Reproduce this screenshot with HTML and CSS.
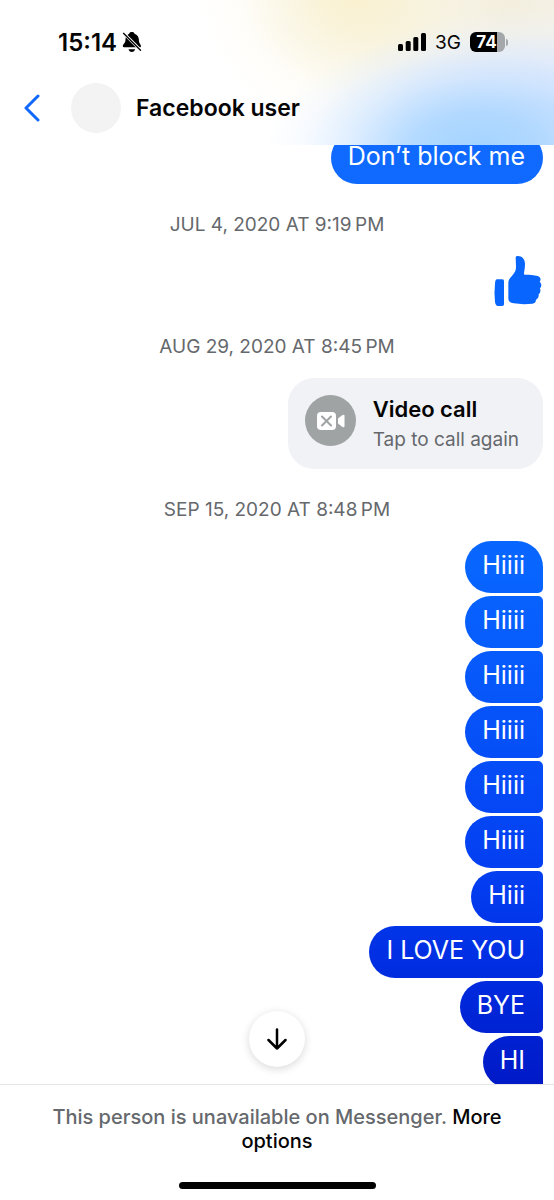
FILE: index.html
```html
<!DOCTYPE html>
<html lang="en">
<head>
<meta charset="utf-8">
<meta name="viewport" content="width=device-width, initial-scale=1">
<title>Facebook user</title>
<link rel="stylesheet" href="styles.css">
</head>
<body>
<div class="screen">
  <header class="header">
    <div class="status">
      <div class="status-group">
        <span class="clock">15:14</span>
        <svg class="bell" viewBox="0 0 57 60" aria-hidden="true">
          <path d="M28 0c5 0 7 2 8 5 9 3 12 9 13 17 0 9 2 12 5 16 2 3 2 8-2 8H5c-5 0-5-5-2-9 5-5 6-8 6-15C9 14 13 8 20 5c1-3 3-5 8-5zM18 52h20c-1 5-5 8-10 8s-9-3-10-8z"/>
          <path class="bell-gap" d="M0 0l57 57"/>
          <path class="bell-slash" d="M3 4l51 51"/>
        </svg>
      </div>
      <div class="status-group status-right">
        <svg class="signal" viewBox="0 0 28 18" aria-hidden="true">
          <rect x="0" y="11" width="5" height="7" rx="1.5"/>
          <rect x="7.7" y="8" width="5" height="10" rx="1.5"/>
          <rect x="15.3" y="4" width="5" height="14" rx="1.5"/>
          <rect x="23" y="0" width="5" height="18" rx="1.5"/>
        </svg>
        <span class="network">3G</span>
        <span class="battery"><span class="battery-body">74</span><span class="battery-tip"></span></span>
      </div>
    </div>
    <div class="nav">
      <button class="back" type="button" aria-label="Back">
        <svg viewBox="0 0 16 28" aria-hidden="true"><path d="M14 2L2 14l12 12"/></svg>
      </button>
      <span class="avatar"></span>
      <h1 class="name">Facebook user</h1>
    </div>
  </header>

  <main class="chat">
    <div class="messages">
      <p class="bubble">Don’t block me</p>
      <p class="date">JUL 4, 2020 AT 9:19&#8201;PM</p>
      <svg class="thumb" viewBox="0 0 147 150" role="img" aria-label="Thumbs up">
        <path d="M9 70h16q5 0 5 5v70q0 5-5 5H12q-7 0-9-12-3-28 0-56 1-12 6-12z"/>
        <path d="M65 6c0-4 2-6 6-6 14 0 22 10 22 24 0 12-2 20-3 28-1 3 0 4 3 4 14 0 27 1 38 4 9 3 11 11 6 17 6 5 7 13 1 20 3 8 1 14-4 18 1 8-2 13-8 16-1 8-4 11-11 12-18 2-38 2-56-1-11-1-16-6-16-16V82c0-9 3-14 10-21 9-10 14-19 13-30z"/>
      </svg>
      <p class="date">AUG 29, 2020 AT 8:45&#8201;PM</p>
      <button class="call" type="button">
        <svg class="call-icon" viewBox="0 0 51 51" aria-hidden="true">
          <circle class="call-disc" cx="25.5" cy="25.5" r="25.5"/>
          <rect class="call-camera" x="12" y="17" width="19" height="18" rx="4"/>
          <path class="call-camera" d="M33 23.500l4.500-3.500q2-1 2 .8v10.400q0 1.800-2 .8L33 28.500z"/>
          <path class="call-cross" d="M17 21.500l9 9m0-9l-9 9"/>
        </svg>
        <span class="call-text">
          <strong class="call-title">Video call</strong>
          <span class="call-hint">Tap to call again</span>
        </span>
      </button>
      <p class="date">SEP 15, 2020 AT 8:48&#8201;PM</p>
      <div class="group">
        <p class="bubble">Hiiii</p>
        <p class="bubble">Hiiii</p>
        <p class="bubble">Hiiii</p>
        <p class="bubble">Hiiii</p>
        <p class="bubble">Hiiii</p>
        <p class="bubble">Hiiii</p>
        <p class="bubble">Hiii</p>
        <p class="bubble">I LOVE YOU</p>
        <p class="bubble">BYE</p>
        <p class="bubble">HI</p>
      </div>
    </div>
    <button class="jump" type="button" aria-label="Scroll to latest">
      <svg viewBox="0 0 20 22" aria-hidden="true"><path d="M10 1.500v19M1.500 12l8.500 8.500 8.500-8.500"/></svg>
    </button>
  </main>

  <footer class="footer">
    <p class="notice">This person is unavailable on Messenger. <a class="more" href="#">More options</a></p>
    <div class="home-bar"></div>
  </footer>
</div>
</body>
</html>
```

FILE: styles.css
```css
* {
  box-sizing: border-box;
}

body {
  margin: 0;
  background: #fff;
  color: #050505;
  font-family: Inter, "Liberation Sans", sans-serif;
}

p,
h1 {
  margin: 0;
}

button {
  border: 0;
  padding: 0;
  background: none;
  color: inherit;
  font: inherit;
}

.screen {
  display: flex;
  flex-direction: column;
  height: 100vh;
  overflow: hidden;
}

/* Header */

.header {
  z-index: 1;
  flex: none;
  padding: 28px 46px 12px 24px;
  background:
    radial-gradient(ellipse 38% 84% at 86% 104%, #a2d3ff 0%, #abd6ffdd 32%, #c4e0ff88 60%, #d8e8ff33 82%, #e6f0ff00 100%),
    radial-gradient(ellipse 42% 70% at 100% 74%, #cfe2ff 0%, #dbe8ffaa 45%, #e8f0ff44 75%, #f0f5ff00 100%),
    radial-gradient(ellipse 28% 100% at 64% -8%, #f9f0cc 0%, #faf3d8bb 40%, #fcf8e844 75%, #ffffff00 100%),
    radial-gradient(ellipse 44% 90% at 90% 0%, #f3eedd 0%, #f2efe4cc 45%, #f6f6f655 78%, #ffffff00 100%),
    #fff;
}

.status,
.status-group,
.nav,
.battery {
  display: flex;
  align-items: center;
}

.status {
  justify-content: space-between;
  height: 28px;
  padding-left: 34px;
}

.status-group {
  gap: 5px;
}

.status-right {
  gap: 9px;
}

.clock {
  font-size: 24px;
  font-weight: 600;
}

.bell {
  width: 20px;
  height: 20px;
}

.bell-gap {
  stroke: #fff;
  stroke-width: 9;
}

.bell-slash {
  stroke: #000;
  stroke-width: 4;
  stroke-linecap: round;
}

.signal {
  width: 28px;
  height: 18px;
}

.network {
  font-size: 19px;
}

.battery {
  gap: 1px;
}

.battery-body {
  width: 35px;
  height: 20px;
  padding-right: 2px;
  border-radius: 6px;
  background: linear-gradient(to right, #000 76%, #a5a8ab 76%);
  color: #fff;
  font-size: 17px;
  font-weight: 700;
  line-height: 20px;
  text-align: center;
}

.battery-tip {
  width: 2px;
  height: 7px;
  border-radius: 0 2px 2px 0;
  background: #a5a8ab;
}

.nav {
  padding-top: 27px;
}

.back {
  display: flex;
  width: 47px;
}

.back svg {
  width: 16px;
  height: 28px;
  fill: none;
  stroke: #1168fb;
  stroke-width: 3;
  stroke-linecap: round;
  stroke-linejoin: round;
}

.avatar {
  width: 50px;
  height: 50px;
  border-radius: 50%;
  background: #f3f3f3;
}

.name {
  margin-left: 15px;
  font-size: 23px;
  font-weight: 600;
  line-height: 28px;
}

/* Conversation */

.chat {
  position: relative;
  flex: 1;
  min-height: 0;
  overflow: hidden;
}

/* The list is scrolled slightly under the header. */
.messages {
  display: flex;
  flex-direction: column;
  align-items: flex-end;
  margin-top: -13px;
  padding: 0 11px;
}

.bubble {
  padding: 8px 18px 12px 17px;
  border-radius: 26px;
  background: linear-gradient(#106aff 12%, #0866ff 47%, #0650f8 62%, #033cf0 74%, #002ade 82%, #001ac8 90%) fixed;
  color: #fff;
  font-size: 25px;
  font-weight: 400;
  line-height: 32px;
}

.group {
  display: flex;
  flex-direction: column;
  align-items: flex-end;
  gap: 3px;
}

.group .bubble {
  border-radius: 26px 5px 5px 26px;
}

.group .bubble:first-child {
  border-top-right-radius: 26px;
}

.date {
  align-self: center;
  margin: 29px 0 19px;
  color: #65686c;
  font-size: 19px;
  line-height: 24px;
}

.thumb {
  width: 49px;
  height: 50px;
  fill: #0866ff;
}

.call {
  display: flex;
  align-items: flex-start;
  gap: 17px;
  padding: 17px 24px 15px 17px;
  border-radius: 26px;
  background: #f1f2f6;
  text-align: left;
}

.call-icon {
  width: 51px;
  height: 51px;
}

.call-disc {
  fill: #9fa3a4;
}

.call-camera {
  fill: #fff;
}

.call-cross {
  fill: none;
  stroke: #9fa3a4;
  stroke-width: 2;
  stroke-linecap: round;
}

.call-text {
  display: flex;
  flex-direction: column;
  gap: 3px;
}

.call-title {
  font-size: 22px;
  font-weight: 600;
  line-height: 28px;
}

.call-hint {
  color: #65686c;
  font-size: 19px;
  line-height: 28px;
}

.jump {
  position: absolute;
  bottom: 17px;
  left: 50%;
  display: flex;
  align-items: center;
  justify-content: center;
  width: 56px;
  height: 56px;
  margin-left: -28px;
  border-radius: 50%;
  background: #fff;
  box-shadow: 0 2px 8px #00000028;
}

.jump svg {
  width: 20px;
  height: 22px;
  fill: none;
  stroke: #000;
  stroke-width: 2.5;
  stroke-linecap: round;
  stroke-linejoin: round;
}

/* Footer */

.footer {
  flex: none;
  padding: 20px 40px 11px;
  border-top: 1px solid #e6e6e8;
  background: #fff;
}

.notice {
  color: #65686c;
  font-size: 20px;
  font-weight: 500;
  line-height: 24px;
  text-align: center;
}

.more {
  color: #050505;
  text-decoration: none;
}

.home-bar {
  width: 197px;
  height: 7px;
  margin: 29px auto 0;
  border-radius: 4px;
  background: #000;
}
```
